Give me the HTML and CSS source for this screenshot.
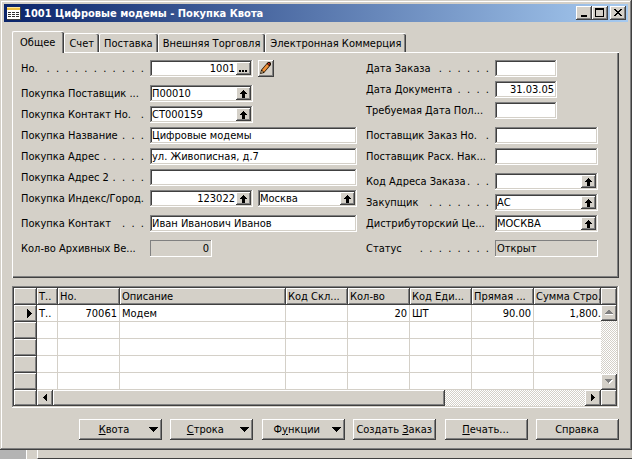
FILE: index.html
```html
<!DOCTYPE html>
<html lang="ru">
<head>
  <meta charset="UTF-8" />
  <title>1001 Цифровые модемы - Покупка Квота</title>
  <link rel="stylesheet" href="styles.css">
</head>
<body>
  <svg width="0" height="0" class="sprite" aria-hidden="true">
    <symbol id="up" viewBox="0 0 11 9" shape-rendering="crispEdges">
      <path d="M5 1h1v1h1v1h1v1h1v1H7v4H4V5H2V4h1V3h1V2h1z" />
    </symbol>
    <symbol id="down" viewBox="0 0 9 5" shape-rendering="crispEdges">
      <path d="M0 0h9v1H8v1H7v1H6v1H5v1H4V4H3V3H2V2H1V1H0z" />
    </symbol>
  </svg>

  <div class="window">
    <header class="titlebar">
      <svg class="app-icon" width="14" height="13" viewBox="0 0 14 13" shape-rendering="crispEdges" aria-hidden="true">
        <rect width="14" height="13" fill="#404040" />
        <rect width="13" height="3" fill="#f0c040" />
        <rect width="13" height="1" fill="#ffe9a0" />
        <rect y="3" width="13" height="9" fill="#fff" />
        <path d="M1 5h3v1H1zM5 5h3v1H5zM9 5h3v1H9zM1 7h3v1H1zM5 7h3v1H5zM9 7h3v1H9zM1 9h3v1H1zM5 9h3v1H5zM9 9h3v1H9z" fill="#303030" />
      </svg>
      <h1>1001 Цифровые модемы - Покупка Квота</h1>
      <div class="window-buttons">
        <button class="raised" aria-label="Свернуть">
          <svg width="10" height="9" viewBox="0 0 10 9" shape-rendering="crispEdges"><path d="M2 7h6v2H2z" /></svg>
        </button>
        <button class="raised" aria-label="Развернуть">
          <svg width="10" height="9" viewBox="0 0 10 9" shape-rendering="crispEdges"><path d="M0 0h9v9H0zM1 2v6h7V2z" fill-rule="evenodd" /></svg>
        </button>
        <button class="raised close" aria-label="Закрыть">
          <svg width="8" height="7" viewBox="0 0 8 7" shape-rendering="crispEdges"><path d="M0 0h2v1h1v1h2V1h1V0h2v1H7v1H6v1H5v1h1v1h1v1h1v1H6V6H5V5H3v1H2v1H0V6h1V5h1V4h1V3H2V2H1V1H0z" /></svg>
        </button>
      </div>
    </header>

    <main>
      <nav class="tabs" role="tablist">
        <button class="tab active" role="tab" aria-selected="true">Общее</button>
        <button class="tab" role="tab">Счет</button>
        <button class="tab" role="tab">Поставка</button>
        <button class="tab" role="tab">Внешняя Торговля</button>
        <button class="tab" role="tab">Электронная Коммерция</button>
      </nav>

      <form class="panel">
        <div class="column left">
          <div class="group">
            <div class="row">
              <label for="no"><span>Но.</span><span class="dots">.  .  .  .  .  .  .  .  .  .  .</span></label>
              <div class="field medium"><input id="no" class="num" value="1001"><button type="button" class="raised" aria-label="Выбрать"><svg width="9" height="9" viewBox="0 0 9 9" shape-rendering="crispEdges"><path d="M0 6h2v2H0zM3 6h2v2H3zM6 6h2v2H6z" /></svg></button></div>
              <button type="button" class="raised edit" aria-label="Изменить">
                <svg width="11" height="12" viewBox="0 0 11 12" aria-hidden="true">
                  <path d="M0 12l1-4 6-7 1-1h2l1 1v2l-1 1-6 7z" fill="#201000" />
                  <path d="M2 8l5-6 2 2-5 6z" fill="#f0913a" />
                  <path d="M8 1h1l1 1-1 1-1-1z" fill="#e03020" />
                  <path d="M1 10l1-1 1 1-1 1z" fill="#f8e0b0" />
                </svg>
              </button>
            </div>
          </div>
          <div class="group">
            <div class="row">
              <label for="vendor">Покупка Поставщик ...</label>
              <div class="field medium"><input id="vendor" value="П00010"><button type="button" class="raised" aria-label="Выбрать"><svg width="11" height="9"><use href="#up" /></svg></button></div>
            </div>
            <div class="row">
              <label for="contactNo"><span>Покупка Контакт Но.</span><span class="dots">.</span></label>
              <div class="field medium"><input id="contactNo" value="СТ000159"><button type="button" class="raised" aria-label="Выбрать"><svg width="11" height="9"><use href="#up" /></svg></button></div>
            </div>
            <div class="row">
              <label for="name"><span>Покупка Название</span><span class="dots">.  .  .</span></label>
              <div class="field wide"><input id="name" value="Цифровые модемы"></div>
            </div>
            <div class="row">
              <label for="address"><span>Покупка Адрес</span><span class="dots">.  .  .  .  .</span></label>
              <div class="field wide"><input id="address" value="ул. Живописная, д.7"></div>
            </div>
            <div class="row">
              <label for="address2"><span>Покупка Адрес 2</span><span class="dots">.  .  .  .</span></label>
              <div class="field wide"><input id="address2"></div>
            </div>
            <div class="row">
              <label for="zip">Покупка Индекс/Город.</label>
              <div class="field medium"><input id="zip" class="num" value="123022"><button type="button" class="raised" aria-label="Выбрать"><svg width="11" height="9"><use href="#up" /></svg></button></div>
              <div class="field city"><input value="Москва" aria-label="Город"><button type="button" class="raised" aria-label="Выбрать"><svg width="11" height="9"><use href="#up" /></svg></button></div>
            </div>
          </div>
          <div class="group">
            <div class="row">
              <label for="contact"><span>Покупка Контакт</span><span class="dots">.  .  .</span></label>
              <div class="field wide"><input id="contact" value="Иван Иванович Иванов"></div>
            </div>
          </div>
          <div class="group">
            <div class="row">
              <label for="archived">Кол-во Архивных Ве...</label>
              <div class="field small readonly"><input id="archived" class="num" value="0" readonly></div>
            </div>
          </div>
        </div>

        <div class="column right">
          <div class="group">
            <div class="row">
              <label for="orderDate"><span>Дата Заказа</span><span class="dots">.  .  .  .  .  .</span></label>
              <div class="field small"><input id="orderDate"></div>
            </div>
            <div class="row">
              <label for="docDate"><span>Дата Документа</span><span class="dots">.  .  .  .</span></label>
              <div class="field small"><input id="docDate" class="num" value="31.03.05"></div>
            </div>
            <div class="row">
              <label for="reqDate">Требуемая Дата Пол...</label>
              <div class="field small"><input id="reqDate"></div>
            </div>
          </div>
          <div class="group">
            <div class="row">
              <label for="vendorOrder"><span>Поставщик Заказ Но.</span><span class="dots">.</span></label>
              <div class="field medium"><input id="vendorOrder"></div>
            </div>
            <div class="row">
              <label for="vendorShip">Поставщик Расх. Нак...</label>
              <div class="field medium"><input id="vendorShip"></div>
            </div>
          </div>
          <div class="group">
            <div class="row">
              <label for="addrCode"><span>Код Адреса Заказа</span><span class="dots">.  .  .</span></label>
              <div class="field medium"><input id="addrCode"><button type="button" class="raised" aria-label="Выбрать"><svg width="11" height="9"><use href="#up" /></svg></button></div>
            </div>
            <div class="row">
              <label for="buyer"><span>Закупщик</span><span class="dots">.  .  .  .  .  .  .</span></label>
              <div class="field medium"><input id="buyer" value="АС"><button type="button" class="raised" aria-label="Выбрать"><svg width="11" height="9"><use href="#up" /></svg></button></div>
            </div>
            <div class="row">
              <label for="center">Дистрибуторский Це...</label>
              <div class="field medium"><input id="center" value="МОСКВА"><button type="button" class="raised" aria-label="Выбрать"><svg width="11" height="9"><use href="#up" /></svg></button></div>
            </div>
          </div>
          <div class="group">
            <div class="row">
              <label for="status"><span>Статус</span><span class="dots">.  .  .  .  .  .  .  .</span></label>
              <div class="field medium readonly"><input id="status" value="Открыт" readonly></div>
            </div>
          </div>
        </div>
      </form>

      <section class="lines">
        <table>
          <colgroup>
            <col class="c-sel"><col class="c-type"><col class="c-std"><col><col class="c-std"><col class="c-std"><col class="c-std"><col class="c-std"><col class="c-sum">
          </colgroup>
          <thead>
            <tr><th></th><th>Т..</th><th>Но.</th><th>Описание</th><th>Код Скл...</th><th>Кол-во</th><th>Код Еди...</th><th>Прямая ...</th><th>Сумма Стро.</th></tr>
          </thead>
          <tbody>
            <tr>
              <th class="current"><svg width="5" height="9" viewBox="0 0 5 9" shape-rendering="crispEdges"><path d="M0 0h1v1h1v1h1v1h1v1h1v1H4v1H3v1H2v1H1v1H0z" /></svg></th>
              <td>Т..</td><td class="num">70061</td><td>Модем</td><td></td><td class="num">20</td><td>ШТ</td><td class="num">90.00</td><td class="num cut">1,800.</td>
            </tr>
            <tr><th></th><td></td><td></td><td></td><td></td><td></td><td></td><td></td><td class="cut"></td></tr>
            <tr><th></th><td></td><td></td><td></td><td></td><td></td><td></td><td></td><td class="cut"></td></tr>
            <tr><th></th><td></td><td></td><td></td><td></td><td></td><td></td><td></td><td class="cut"></td></tr>
            <tr><th></th><td></td><td></td><td></td><td></td><td></td><td></td><td></td><td class="cut"></td></tr>
          </tbody>
        </table>
        <div class="vscroll">
          <div class="corner head raised"></div>
          <button class="raised" aria-label="Вверх"><svg width="8" height="5" viewBox="0 0 8 5" shape-rendering="crispEdges"><path d="M3 0h2v1h1v1h1v1h1v1H0V3h1V2h1V1h1z" fill="#808080" /><path d="M0 4h8v1H0z" fill="#fff" /></svg></button>
          <div class="track"></div>
          <button class="raised" aria-label="Вниз"><svg width="8" height="5" viewBox="0 0 8 5" shape-rendering="crispEdges"><path d="M1 1h7v1H7v1H6v1H5v1H4V4H3z" fill="#fff" /><path d="M0 0h7v1H6v1H5v1H4v1H3V3H2V2H1V1H0z" fill="#808080" /></svg></button>
        </div>
        <div class="hscroll">
          <div class="corner sel raised"></div>
          <button class="raised" aria-label="Влево"><svg width="4" height="7" viewBox="0 0 4 7" shape-rendering="crispEdges"><path d="M4 0v7H3V6H2V5H1V4H0V3h1V2h1V1h1V0z" /></svg></button>
          <div class="thumb raised"></div>
          <div class="track"></div>
          <button class="raised" aria-label="Вправо"><svg width="4" height="7" viewBox="0 0 4 7" shape-rendering="crispEdges"><path d="M0 0h1v1h1v1h1v1h1v1H3v1H2v1H1v1H0z" /></svg></button>
          <div class="corner end raised"></div>
        </div>
      </section>

      <footer class="actions">
        <button class="raised menu"><span><u>К</u>вота</span><svg width="9" height="5"><use href="#down" /></svg></button>
        <button class="raised menu"><span><u>С</u>трока</span><svg width="9" height="5"><use href="#down" /></svg></button>
        <button class="raised menu"><span>Ф<u>у</u>нкции</span><svg width="9" height="5"><use href="#down" /></svg></button>
        <button class="raised"><span>Создать <u>З</u>аказ</span></button>
        <button class="raised"><span><u>П</u>ечать...</span></button>
        <button class="raised"><span>Справка</span></button>
      </footer>
    </main>
  </div>

  <!-- edge of the window underneath -->
  <div class="behind">
    <div class="behind-desk"></div>
    <div class="behind-frame"></div>
    <div class="behind-panel"></div>
  </div>
</body>
</html>
```
FILE: styles.css
```css
:root {
  --face: #d4d0c8;
  --light: #ffffff;
  --shadow: #808080;
  --dark: #404040;
}

* {
  box-sizing: border-box;
}

body {
  margin: 0;
  min-height: 100vh;
  display: flex;
  flex-direction: column;
  background: var(--face);
  color: #000;
  font-family: "DejaVu Sans Condensed", "DejaVu Sans", sans-serif;
  font-size: 11px;
  line-height: 13px;
}

.sprite {
  position: absolute;
}

button, input {
  font: inherit;
  color: inherit;
  margin: 0;
  padding: 0;
  border: 0;
  border-radius: 0;
}

svg {
  display: block;
  flex: none;
}

.raised {
  background: var(--face);
  box-shadow: inset -1px -1px var(--dark), inset 1px 1px var(--light), inset -2px -2px var(--shadow);
}

button.raised {
  display: flex;
  align-items: center;
  justify-content: center;
  padding: 0 1px 1px 0;
}

.window {
  padding: 4px 4px 10px;
  background: var(--face);
  box-shadow: inset -1px -1px var(--dark), inset 1px 1px var(--face), inset -2px -2px var(--shadow), inset 2px 2px var(--light);
}

/* title bar */
.titlebar {
  display: flex;
  align-items: center;
  height: 18px;
  padding: 0 2px 0 3px;
  gap: 3px;
  background: linear-gradient(to right, #0a246a, #a6caf0);
}

.titlebar h1 {
  flex: 1;
  margin: 0;
  font-size: 11px;
  color: #fff;
  white-space: nowrap;
}

.window-buttons {
  display: flex;
}

.window-buttons button {
  width: 16px;
  height: 14px;
}

.window-buttons .close {
  margin-left: 2px;
}

main {
  padding: 9px 9px 0 8px;
}

/* tabs */
.tabs {
  display: flex;
  align-items: flex-end;
  height: 21px;
}

.tab {
  height: 19px;
  padding: 0 5px 0 4px;
  background: var(--face);
  border-top: 1px solid var(--light);
  border-left: 1px solid var(--light);
  border-radius: 2px 2px 0 0;
  box-shadow: inset -1px 0 var(--dark), inset -2px 0 var(--shadow);
  white-space: nowrap;
}

.tab.active {
  height: 22px;
  margin-bottom: -1px;
  padding: 0 9px 0 7px;
  z-index: 1;
}

.panel {
  display: flex;
  padding: 7px 9px 21px 8px;
  border-top: 1px solid var(--light);
  border-left: 1px solid var(--light);
  box-shadow: inset -1px -1px var(--dark), inset -2px -2px var(--shadow);
}

.column, .group {
  display: flex;
  flex-direction: column;
}

.column {
  gap: 8px;
}

.column.left {
  flex: 0 0 345px;
}

.group {
  gap: 4px;
}

.row {
  display: flex;
  align-items: center;
  height: 17px;
}

.row label {
  display: flex;
  justify-content: space-between;
  width: 123px;
  margin-right: 6px;
  white-space: nowrap;
}

.dots {
  white-space: pre;
}

.field {
  display: flex;
  height: 17px;
  padding: 2px;
  background: #fff;
  box-shadow: inset -1px -1px var(--light), inset 1px 1px var(--shadow), inset -2px -2px var(--face), inset 2px 2px var(--dark);
}

.field input {
  flex: 1;
  min-width: 0;
  width: 100%;
  height: 13px;
  padding: 0 1px 0 0;
  background: transparent;
  outline: none;
}

.field button {
  flex: none;
  width: 15px;
  height: 13px;
}

.field.small { width: 62px; }
.field.medium { width: 103px; }
.field.wide { width: 207px; }
.field.city { width: 99px; margin-left: 5px; }

.field.readonly {
  background: var(--face);
  box-shadow: inset -1px -1px var(--light), inset 1px 1px var(--shadow);
}

.num {
  text-align: right;
}

.edit {
  width: 16px;
  height: 17px;
  margin-left: 5px;
}

/* order lines */
.lines {
  display: grid;
  grid-template-columns: 1fr 16px;
  margin-top: 8px;
  padding: 2px;
  background: #fff;
  box-shadow: inset -1px -1px var(--light), inset 1px 1px var(--shadow), inset -2px -2px var(--face), inset 2px 2px var(--dark);
}

table {
  width: 100%;
  table-layout: fixed;
  border-collapse: separate;
  border-spacing: 0;
}

.c-sel { width: 23px; }
.c-type { width: 21px; }
.c-std { width: 62px; }
.c-sum { width: 67px; }

th, td {
  height: 17px;
  padding: 0 2px;
  font-weight: normal;
  text-align: left;
  white-space: nowrap;
  overflow: hidden;
}

th {
  background: var(--face);
  border-right: 1px solid var(--dark);
  border-bottom: 1px solid var(--dark);
  box-shadow: inset 1px 1px var(--light), inset -1px -1px var(--shadow);
}

td {
  border-right: 1px solid var(--face);
  border-bottom: 1px solid var(--face);
}

td.num {
  text-align: right;
}

td.cut {
  padding-right: 0;
  border-right: 0;
}

.current svg {
  margin-left: auto;
  margin-right: 2px;
}

.vscroll {
  display: flex;
  flex-direction: column;
}

.vscroll button {
  height: 16px;
}

.corner.head {
  height: 17px;
}

.track {
  flex: 1;
  background: repeating-conic-gradient(#fff 0 25%, var(--face) 0 50%) 0 0 / 2px 2px;
}

.hscroll {
  grid-column: 1 / -1;
  display: flex;
  height: 16px;
}

.hscroll button, .corner.end {
  width: 16px;
}

.corner.sel {
  width: 23px;
}

.thumb {
  flex: 0 0 65%;
}

.thumb, .hscroll .track {
  min-width: 0;
}

/* bottom buttons */
.actions {
  display: grid;
  grid-template-columns: repeat(6, 83px);
  justify-content: space-between;
  max-width: 540px;
  margin: 11px 0 0 auto;
}

.actions button {
  height: 21px;
  white-space: nowrap;
}

.actions .menu span {
  flex: 1;
}

.actions .menu {
  padding: 0 4px 1px 0;
}

/* sliver of the parent window */
.behind {
  flex: 1;
  display: flex;
  min-height: 8px;
}

.behind-desk {
  width: 26px;
  background: #b4b4b4;
}

.behind-frame {
  width: 11px;
  border-left: 1px solid var(--light);
}

.behind-panel {
  flex: 1;
  border-left: 1px solid var(--light);
  border-bottom: 1px solid var(--dark);
}
```
